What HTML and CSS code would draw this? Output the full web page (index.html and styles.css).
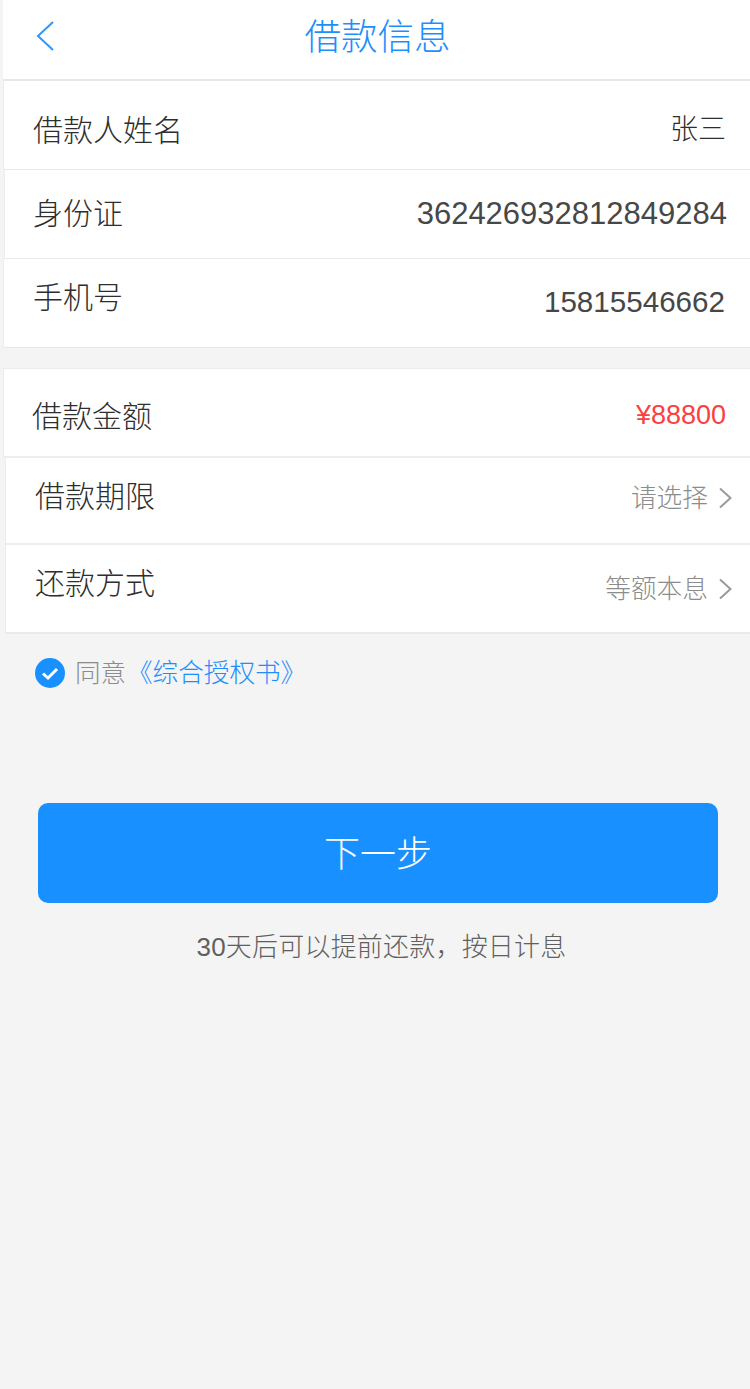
FILE: index.html
```html
<!DOCTYPE html>
<html lang="zh-CN">
<head>
<meta charset="utf-8">
<title>借款信息</title>
<link rel="stylesheet" href="styles.css">
</head>
<body>
<div class="page">
  <header class="nav">
    <svg class="back" width="18" height="30" viewBox="0 0 18 30"><path d="M17 1 2 15l15 14" fill="none" stroke="#2f96fb" stroke-width="2"/></svg>
    <h1 class="title">借款信息</h1>
  </header>

  <section class="group group-one">
    <div class="row row-a"><span class="label">借款人姓名</span><span class="value name">张三</span></div>
    <div class="row row-b"><span class="label">身份证</span><span class="value idno">362426932812849284</span></div>
    <div class="row row-c"><span class="label">手机号</span><span class="value phone">15815546662</span></div>
  </section>

  <section class="group group-two">
    <div class="row row-d"><span class="label">借款金额</span><span class="value amount">¥88800</span></div>
    <div class="row row-e"><span class="label">借款期限</span><span class="pick pick-e">请选择<svg class="chev" width="15" height="22" viewBox="0 0 15 22"><path d="M2 1.500 12.500 11 2 20.500" fill="none" stroke="#9a9a9a" stroke-width="2"/></svg></span></div>
    <div class="row row-f"><span class="label">还款方式</span><span class="pick pick-f">等额本息<svg class="chev" width="15" height="22" viewBox="0 0 15 22"><path d="M2 1.500 12.500 11 2 20.500" fill="none" stroke="#9a9a9a" stroke-width="2"/></svg></span></div>
  </section>

  <div class="agree">
    <svg class="tick" width="30" height="30" viewBox="0 0 30 30"><circle cx="15" cy="15" r="15" fill="#1890ff"/><path d="M8 15.500l5 4.500 9-9" fill="none" stroke="#fff" stroke-width="3"/></svg>
    <span class="agree-text">同意</span><a class="agree-link">《综合授权书》</a>
  </div>

  <button class="next" type="button">下一步</button>
  <p class="hint">30天后可以提前还款，按日计息</p>
</div>
</body>
</html>
```
FILE: styles.css
```css
* { box-sizing: border-box; }
html, body { margin: 0; padding: 0; }
body {
  background: #f4f4f4;
  font-family: "Liberation Sans", "Noto Sans CJK SC", sans-serif;
  font-weight: 300;
}
.page { width: 750px; height: 1389px; overflow: hidden; }

.nav {
  margin-left: 3px;
  height: 81px;
  background: #fff;
  border-bottom: 2px solid #e8e8e8;
  display: flex;
  align-items: center;
  justify-content: center;
  position: relative;
}
.back { position: absolute; left: 33px; top: 21px; }
.title {
  margin: 0 0 3px 2px;
  font-size: 36.500px;
  line-height: 50px;
  font-weight: 300;
  color: #1e8efc;
}

.group { display: flex; flex-direction: column; }
.group-one { height: 267px; }
.group-two { margin-top: 20px; }

.row {
  background: #fff;
  border-left: 1px solid #ececec;
  border-bottom: 1px solid #e8e8e8;
  display: flex;
  justify-content: space-between;
  align-items: flex-start;
  color: #2e2e2e;
}
.row-a { height: 89px; margin-left: 3px; padding: 29px 24px 0 29px; }
.row-b { height: 89px; margin-left: 4px; padding: 23px 23px 0 28px; }
.row-c { height: 89px; margin-left: 3px; padding: 18px 25px 0 29px; }
.row-d { height: 90px; margin-left: 3px; padding: 27px 24px 0 28px; border-top: 1px solid #ececec; border-bottom: 2px solid #eeeeee; }
.row-e { height: 87px; margin-left: 5px; padding: 18px 17px 0 29px; border-bottom: 2px solid #eeeeee; }
.row-f { height: 89px; margin-left: 5px; padding: 18px 17px 0 29px; border-bottom: 2px solid #eaeaea; }

.label { font-size: 30px; line-height: 42px; }
.value { font-size: 30px; line-height: 42px; color: #474747; }
.name { font-size: 28px; line-height: 40px; color: #2e2e2e; }
.idno { font-size: 31px; }
.phone { margin-top: 1px; padding-top: 3px; font-size: 29.600px; }
.amount { font-size: 27px; line-height: 38px; color: #fb4040; }

.pick {
  display: flex;
  align-items: center;
  font-size: 25.700px;
  line-height: 36px;
  color: #8c8c8c;
}
.pick-e { margin-top: 4px; }
.pick-f { margin-top: 8px; }
.chev { margin-left: 10px; }

.agree {
  display: flex;
  align-items: center;
  margin-top: 24px;
  padding-left: 35px;
  height: 30px;
}
.tick { flex: none; }
.agree-text { margin: -6px 0 0 10px; font-size: 25.500px; color: #8c8c8c; }
.agree-link { margin: -6px 0 0 1px; font-size: 25.600px; color: #1e8efc; }

.next {
  display: block;
  width: 680px;
  height: 100px;
  margin: 115px 0 0 38px;
  padding: 0 0 4px;
  background: #1890ff;
  border: 0;
  border-radius: 10px;
  color: #fff;
  font: inherit;
  font-size: 36px;
}
.hint {
  margin: 26px 0 0;
  padding-left: 13px;
  text-align: center;
  font-size: 26px;
  letter-spacing: 0.200px;
  line-height: 36px;
  color: #606060;
}
```
